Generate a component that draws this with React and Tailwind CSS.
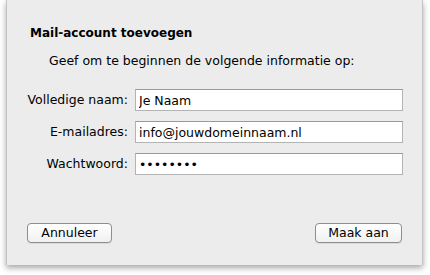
import React from 'react';

const fields = [
    { label: 'Volledige naam:', value: 'Je Naam', type: 'text' },
    { label: 'E-mailadres:', value: 'info@jouwdomeinnaam.nl', type: 'text' },
    { label: 'Wachtwoord:', value: 'geheim12', type: 'password' },
];

function MacButton({ children }) {
    return (
        <button className="h-[20px] rounded-[4px] border border-[#8e8e8e] bg-gradient-to-b from-white to-[#f0f0f0] text-[12.5px] leading-none text-black shadow-[0_1px_0_rgba(0,0,0,0.08)]">
            {children}
        </button>
    );
}

export default function App() {
    return (
        <div className="w-[430px] h-[275px] bg-white pl-[6px] font-['DejaVu_Sans',sans-serif]">
            <div className="w-[417px] h-[265px] bg-[#ececec] border-l border-r border-[#c4c4c4] shadow-[0_3px_6px_rgba(0,0,0,0.35)] flex flex-col">
                <h1 className="mt-[26px] ml-[23px] text-[12px] font-bold text-black leading-[14px]">Mail-account toevoegen</h1>
                <p className="mt-[14px] ml-[42px] text-[12.5px] text-black leading-[14px]">Geef om te beginnen de volgende informatie op:</p>

                <div className="mt-[21px] flex flex-col gap-[10px]">
                    {fields.map(f => (
                        <div key={f.label} className="flex items-center h-[22px]">
                            <label className="w-[121px] text-right text-[12.5px] text-black">{f.label}</label>
                            <input
                                readOnly
                                type={f.type}
                                value={f.value}
                                className="ml-[7px] w-[268px] h-[22px] bg-white border border-[#b4b4b4] border-t-[#9a9a9a] px-[3px] text-[12.5px] text-black outline-none"
                            />
                        </div>
                    ))}
                </div>

                <div className="mt-auto mb-[22px] flex justify-between pl-[20px] pr-[20px]">
                    <div className="w-[85px] flex"><MacButton><span className="block w-[83px]">Annuleer</span></MacButton></div>
                    <div className="w-[87px] flex"><MacButton><span className="block w-[85px]">Maak aan</span></MacButton></div>
                </div>
            </div>
        </div>
    );
}
